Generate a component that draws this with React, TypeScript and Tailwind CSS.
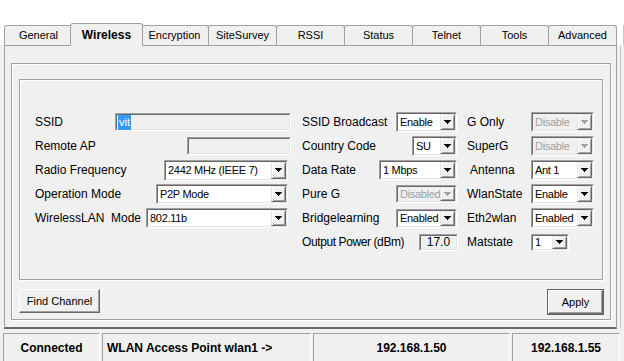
const tabs = ["General", "Wireless", "Encryption", "SiteSurvey", "RSSI", "Status", "Telnet", "Tools", "Advanced"];

const Arrow = ({ disabled }: { disabled?: boolean }) => (
  <svg width="7" height="4" viewBox="0 0 7 4" shapeRendering="crispEdges">
    <path d="M0 0h7v1h-1v1h-1v1h-1v1h-1v-1h-1v-1h-1v-1h-1z" fill={disabled ? "#a0a0a0" : "#000"} />
  </svg>
);

const Combo = ({
  value,
  className = "",
  disabled = false,
}: {
  value: string;
  className?: string;
  disabled?: boolean;
}) => (
  <div className={`flex border border-[#a0a0a0] border-r-white border-b-white ${className}`}>
    <div
      className={`flex min-w-0 flex-1 items-stretch border border-[#696969] border-r-[#e3e3e3] border-b-[#e3e3e3] ${
        disabled ? "bg-[#f0f0f0] text-[#a0a0a0]" : "bg-white text-black"
      }`}
    >
      <span className="flex flex-1 items-center overflow-hidden whitespace-nowrap pl-[2px] text-[11px] leading-none tracking-[-0.3px]">
        {value}
      </span>
      <div className="flex w-[15px] shrink-0 items-center justify-center border border-[#e3e3e3] border-r-[#696969] border-b-[#696969] bg-[#f0f0f0] shadow-[inset_1px_1px_0_white,inset_-1px_-1px_0_#a0a0a0]">
        <Arrow disabled={disabled} />
      </div>
    </div>
  </div>
);

const Field = ({ children, className = "" }: { children?: React.ReactNode; className?: string }) => (
  <div className={`border border-[#a0a0a0] border-r-white border-b-white ${className}`}>
    <div className="flex h-full items-center border border-[#696969] border-r-[#e3e3e3] border-b-[#e3e3e3] bg-[#f0f0f0] px-[1px] text-[11px] leading-none">
      {children}
    </div>
  </div>
);

const Button = ({ children, className = "" }: { children: React.ReactNode; className?: string }) => (
  <div
    className={`flex h-[24px] items-center justify-center border border-white border-r-[#696969] border-b-[#696969] bg-[#f0f0f0] text-[11px] shadow-[inset_-1px_-1px_0_#a0a0a0] ${className}`}
  >
    {children}
  </div>
);

const Row = ({ children }: { children: React.ReactNode }) => (
  <div className="flex h-[24px] items-center whitespace-nowrap">{children}</div>
);

const StatusCell = ({ children, className = "" }: { children: React.ReactNode; className?: string }) => (
  <div
    className={`flex h-[30px] items-center border border-[#a0a0a0] border-r-white border-b-white text-[12px] font-bold ${className}`}
  >
    {children}
  </div>
);

export default function App() {
  return (
    <div className="h-[361px] w-[624px] overflow-hidden bg-[#f0f0f0] font-['Liberation_Sans',Arial,sans-serif] text-[12px] text-black">
      {/* Tab strip */}
      <div className="flex h-[45px] items-end bg-white pl-[4px]">
        {tabs.map((t, i) =>
          t === "Wireless" ? (
            <div
              key={t}
              className="relative z-10 -mr-[2px] -mb-px -ml-[3px] flex h-[23px] w-[73px] items-center justify-center rounded-t-[3px] border border-b-0 border-[#a0a0a0] bg-[#f0f0f0] text-[12px] font-bold"
            >
              {t}
            </div>
          ) : (
            <div
              key={t}
              className={`flex h-[20px] w-[69px] items-center justify-center rounded-t-[3px] border border-b-0 border-[#a0a0a0] bg-[#f0f0f0] text-[11px] ${
                i > 0 ? "-ml-px" : ""
              }`}
            >
              {t}
            </div>
          )
        )}
        <div className="ml-auto h-[20px] w-[3px] border-r border-[#c8c8c8]" />
      </div>

      <div className="flex">
        {/* Tab page */}
        <div className="ml-[4px] h-[284px] w-[613px] border border-[#a0a0a0] border-b-2 border-b-[#696969] pt-[17px] pl-[6px]">
          <div className="h-[257px] w-[600px] border border-[#a0a0a0] pt-[15px] pl-[7px] shadow-[inset_1px_1px_0_white,1px_1px_0_white]">
            <div className="flex h-[201px] w-[584px] border border-[#a0a0a0] pt-[30px] pl-[15px] shadow-[inset_1px_1px_0_white,1px_1px_0_white]">
              {/* Left column */}
              <div className="flex w-[256px] flex-col">
                <Row>
                  <span>SSID</span>
                  <Field className="ml-auto h-[18px] w-[176px]">
                    <span className="bg-[#3399ff] px-px py-[2px] text-white">vit</span>
                  </Field>
                </Row>
                <Row>
                  <span>Remote AP</span>
                  <Field className="ml-auto h-[18px] w-[104px]" />
                </Row>
                <Row>
                  <span>Radio Frequency</span>
                  <Combo value="2442 MHz (IEEE 7)" className="mr-[3px] ml-auto h-[21px] w-[124px]" />
                </Row>
                <Row>
                  <span>Operation Mode</span>
                  <Combo value="P2P Mode" className="mr-[3px] ml-auto h-[20px] w-[132px]" />
                </Row>
                <Row>
                  <span className="whitespace-pre">WirelessLAN  Mode</span>
                  <Combo value="802.11b" className="mr-[3px] ml-auto h-[20px] w-[142px]" />
                </Row>
              </div>

              {/* Middle column */}
              <div className="ml-[11px] flex w-[156px] flex-col">
                <Row>
                  <span>SSID Broadcast</span>
                  <Combo value="Enable" className="mr-px ml-auto h-[20px] w-[61px]" />
                </Row>
                <Row>
                  <span>Country Code</span>
                  <Combo value="SU" className="mr-px ml-auto h-[20px] w-[45px]" />
                </Row>
                <Row>
                  <span>Data Rate</span>
                  <Combo value="1 Mbps" className="mr-px ml-auto h-[20px] w-[78px]" />
                </Row>
                <Row>
                  <span>Pure G</span>
                  <Combo value="Disabled" disabled className="mr-px ml-auto h-[18px] w-[61px]" />
                </Row>
                <Row>
                  <span>Bridgelearning</span>
                  <Combo value="Enabled" className="mr-px ml-auto h-[19px] w-[61px]" />
                </Row>
                <Row>
                  <span className="tracking-[-0.4px]">Output Power (dBm)</span>
                  <Field className="ml-auto h-[17px] w-[39px]">
                    <span className="w-full text-center text-[12px]">17.0</span>
                  </Field>
                </Row>
              </div>

              {/* Right column */}
              <div className="ml-[9px] flex w-[127px] flex-col">
                <Row>
                  <span className="w-[64px] shrink-0">G Only</span>
                  <Combo value="Disable" disabled className="h-[20px] w-[63px]" />
                </Row>
                <Row>
                  <span className="w-[64px] shrink-0">SuperG</span>
                  <Combo value="Disable" disabled className="h-[20px] w-[63px]" />
                </Row>
                <Row>
                  <span className="w-[64px] shrink-0 pl-[3px]">Antenna</span>
                  <Combo value="Ant 1" className="h-[20px] w-[63px]" />
                </Row>
                <Row>
                  <span className="w-[64px] shrink-0">WlanState</span>
                  <Combo value="Enable" className="h-[20px] w-[63px]" />
                </Row>
                <Row>
                  <span className="w-[64px] shrink-0">Eth2wlan</span>
                  <Combo value="Enabled" className="h-[20px] w-[63px]" />
                </Row>
                <Row>
                  <span className="w-[64px] shrink-0">Matstate</span>
                  <Combo value="1" className="h-[17px] w-[38px]" />
                </Row>
              </div>
            </div>

            <div className="mt-[9px] flex justify-between pr-[6px]">
              <Button className="w-[81px]">Find Channel</Button>
              <div className="border border-[#646464]">
                <Button className="h-[22px] w-[55px]">Apply</Button>
              </div>
            </div>
          </div>
        </div>
        <div className="ml-[3px] h-[284px] w-px bg-[#c8c8c8]" />
      </div>

      {/* Status bar */}
      <div className="mt-[4px] flex gap-[2px] pl-[3px]">
        <StatusCell className="w-[97px] justify-center">Connected</StatusCell>
        <StatusCell className="w-[209px] pl-[4px]">WLAN Access Point wlan1 -&gt;</StatusCell>
        <StatusCell className="w-[197px] justify-center">192.168.1.50</StatusCell>
        <StatusCell className="w-[108px] justify-center">192.168.1.55</StatusCell>
      </div>
    </div>
  );
}
